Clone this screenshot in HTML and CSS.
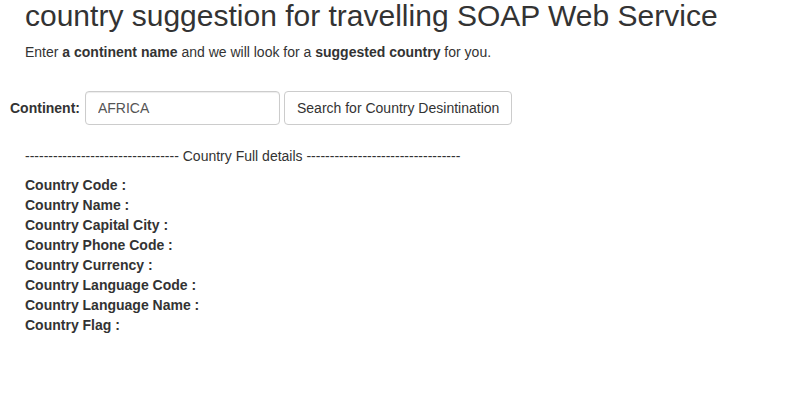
FILE: index.html
```html
<!DOCTYPE html>
<html>
<head>
<meta charset="utf-8">
<link rel="stylesheet" href="styles.css">
</head>
<body>
<div class="intro">
  <h1 class="title">country suggestion for travelling SOAP Web Service</h1>
  <p class="lead">Enter <b>a continent name</b> and we will look for a <b>suggested country</b> for you.</p>
</div>
<form class="search">
  <label class="lbl" for="continent">Continent:</label>
  <input class="field" id="continent" type="text" value="AFRICA">
  <button class="btn" type="button">Search for Country Desintination</button>
</form>
<div class="details">
  <div class="sep">--------------------------------- Country Full details ---------------------------------</div>
  <ul class="rows">
    <li>Country Code :</li>
    <li>Country Name :</li>
    <li>Country Capital City :</li>
    <li>Country Phone Code :</li>
    <li>Country Currency :</li>
    <li>Country Language Code :</li>
    <li>Country Language Name :</li>
    <li>Country Flag :</li>
  </ul>
</div>
</body>
</html>
```
FILE: styles.css
```css
html, body {
  margin: 0;
  padding: 0;
  background: #fff;
}
body {
  font-family: "Liberation Sans", Arial, Helvetica, sans-serif;
  font-size: 14px;
  line-height: 20px;
  color: #333;
}
.intro {
  padding: 0 25px;
}
.title {
  margin: 0;
  font-size: 30px;
  font-weight: normal;
  line-height: 32px;
  color: #333;
}
.lead {
  margin: 10px 0 0;
}
.search {
  display: flex;
  align-items: center;
  gap: 5px;
  margin: 29px 0 0 10px;
}
.field {
  box-sizing: border-box;
  width: 195px;
  height: 34px;
  padding: 6px 12px;
  font-family: inherit;
  font-size: 14px;
  color: #555;
  border: 1px solid #ccc;
  border-radius: 4px;
  box-shadow: inset 0 1px 1px rgba(0,0,0,0.075);
}
.lbl {
  font-weight: bold;
}
.btn {
  box-sizing: border-box;
  height: 34px;
  margin-left: -1px;
  padding: 6px 12px;
  font-family: inherit;
  font-size: 14px;
  color: #333;
  background: #fff;
  border: 1px solid #ccc;
  border-radius: 4px;
}
.details {
  padding: 0 25px;
  margin-top: 21px;
}
.rows {
  list-style: none;
  margin: 9px 0 0;
  padding: 0;
  font-weight: bold;
}
```
